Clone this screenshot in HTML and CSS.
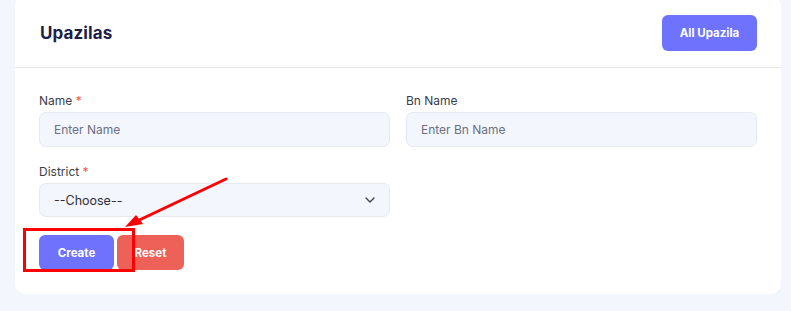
FILE: index.html
```html
<!DOCTYPE html>
<html>
<head>
<meta charset="utf-8">
<link rel="stylesheet" href="styles.css">
</head>
<body>
<div class="page">
  <div class="card">
    <div class="card-header">
      <h1 class="title">Upazilas</h1>
      <button class="btn btn-primary btn-all">All Upazila</button>
    </div>
    <form class="card-body">
      <div class="row">
        <div class="field">
          <label class="label">Name <span class="req">*</span></label>
          <input class="input" type="text" placeholder="Enter Name">
        </div>
        <div class="field">
          <label class="label">Bn Name</label>
          <input class="input" type="text" placeholder="Enter Bn Name">
        </div>
      </div>
      <div class="row">
        <div class="field">
          <label class="label">District <span class="req">*</span></label>
          <div class="select">
            <span>--Choose--</span>
            <svg class="chev" width="10" height="6" viewBox="0 0 10 6"><path d="M1 1l4 4 4-4" fill="none" stroke="#444" stroke-width="1.4" stroke-linecap="round" stroke-linejoin="round"/></svg>
          </div>
        </div>
        <div class="field"></div>
      </div>
      <div class="actions">
        <button type="button" class="btn btn-primary btn-create">Create</button>
        <button type="button" class="btn btn-danger btn-reset">Reset</button>
      </div>
    </form>
  </div>
  <div class="annot-box"></div>
  <svg class="annot-arrow" width="791" height="311" viewBox="0 0 791 311">
    <line x1="226" y1="183" x2="133" y2="227" stroke="#ff0000" stroke-width="3" stroke-linecap="round"/>
    <polygon points="125,231 136,219 143,228" fill="#ff0000"/>
  </svg>
</div>
</body>
</html>
```
FILE: styles.css
```css
* { box-sizing: border-box; }
html, body { margin: 0; padding: 0; }
body {
  background: #f3f6fd;
  font-family: "Inter", "Open Sans", sans-serif;
  width: 791px;
  height: 311px;
  overflow: hidden;
}
.page {
  position: relative;
  padding: 0 10px 17px 15px;
}
.card {
  margin-top: -4px;
  background: #ffffff;
  border-radius: 10px;
}
.card-header {
  height: 72px;
  display: flex;
  align-items: center;
  justify-content: space-between;
  padding: 2px 24px 0 25px;
  border-bottom: 1px solid #e4e6ea;
}
.title {
  margin: 0;
  font-size: 17px;
  font-weight: 700;
  color: #1c1f4a;
  letter-spacing: 0.1px;
}
.btn {
  border: none;
  font-family: "Inter", "Open Sans", sans-serif;
  font-weight: 700;
  font-size: 11.5px;
  color: #ffffff;
  border-radius: 6px;
  height: 35px;
  padding: 0;
}
.btn-primary { background: #6e72fc; }
.btn-danger { background: #ee6158; }
.btn-all { width: 95px; height: 36px; }
.card-body {
  padding: 24px;
  margin: 0;
  display: flex;
  flex-direction: column;
  gap: 16px;
}
.row {
  display: grid;
  grid-template-columns: 1fr 1fr;
  column-gap: 16px;
}
.field { display: flex; flex-direction: column; }
.label {
  font-size: 12px;
  line-height: 18px;
  color: #3b3d4a;
  margin-bottom: 2px;
}
.req { color: #f0584f; }
.input, .select {
  height: 35px;
  background: #f3f6fd;
  border: 1px solid #e6e9f1;
  border-radius: 7px;
  padding: 0 14px;
  font-family: "Inter", "Open Sans", sans-serif;
  font-size: 12px;
  color: #333;
  outline: none;
}
.input::placeholder { color: #6c7080; }
.select {
  display: flex;
  align-items: center;
  justify-content: space-between;
  color: #2e2f38;
  font-size: 12.5px;
  height: 34px;
}
.actions {
  display: flex;
  gap: 3px;
  margin-top: 2px;
}
.btn-create { width: 75px; }
.btn-reset { width: 67px; }
.annot-box {
  position: absolute;
  left: 23px;
  top: 232px;
  width: 112px;
  height: 44px;
  border: 3px solid #ff0000;
}
.annot-arrow {
  position: absolute;
  left: 0;
  top: 0;
  pointer-events: none;
}
```
